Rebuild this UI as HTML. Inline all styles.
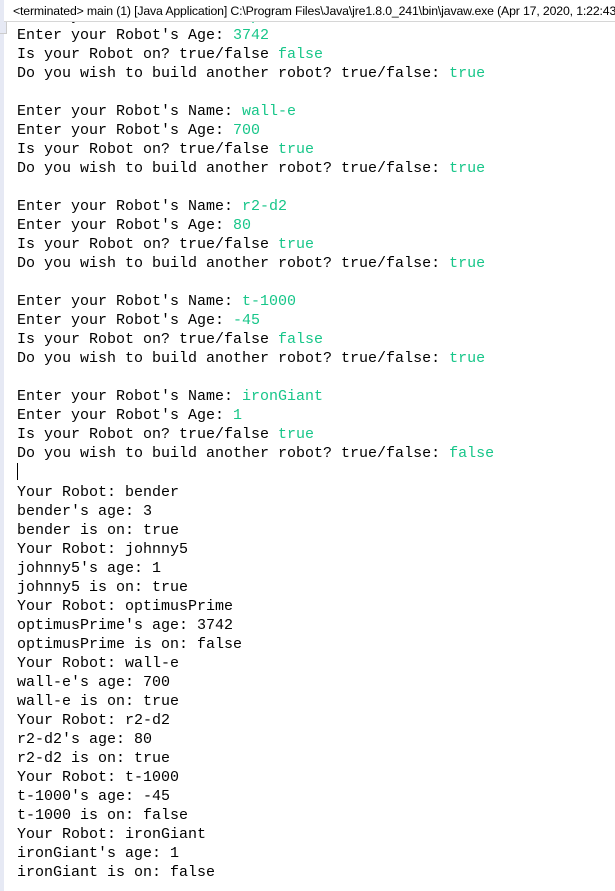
<!DOCTYPE html>
<html><head><style>
body{margin:0;width:615px;height:891px;background:#fff;overflow:hidden;position:relative}
#strip{position:absolute;left:0;top:0;width:4px;height:891px;background:#e6e9f4}
#hdr{position:absolute;left:4px;top:0;width:611px;height:22px;background:#fff;border-bottom:1px solid #d6d6d6;z-index:2;font:12.3px "Liberation Sans",sans-serif;color:#000;white-space:nowrap;overflow:hidden;line-height:22px;padding-left:9px;box-sizing:border-box;letter-spacing:-0.15px}
#tab{position:absolute;left:0;top:22px;width:6px;height:11px;border-right:1px solid #ccc;border-bottom:1px solid #ccc;background:#e6e9f4;z-index:2}
pre{position:absolute;left:17px;top:6.5px;margin:0;font:15px/19px "Liberation Mono",monospace;color:#000}
.g{color:#17c689}
.cur{display:inline-block;width:1px;height:17px;background:#000;vertical-align:-3px}
</style></head><body>
<div id="strip"></div>
<div id="hdr">&lt;terminated&gt; main (1) [Java Application] C:\Program Files\Java\jre1.8.0_241\bin\javaw.exe (Apr 17, 2020, 1:22:43 AM)</div>
<div id="tab"></div>
<pre>Enter your Robot's Name: <span class="g">optimusPrime</span>
Enter your Robot's Age: <span class="g">3742</span>
Is your Robot on? true/false <span class="g">false</span>
Do you wish to build another robot? true/false: <span class="g">true</span>

Enter your Robot's Name: <span class="g">wall-e</span>
Enter your Robot's Age: <span class="g">700</span>
Is your Robot on? true/false <span class="g">true</span>
Do you wish to build another robot? true/false: <span class="g">true</span>

Enter your Robot's Name: <span class="g">r2-d2</span>
Enter your Robot's Age: <span class="g">80</span>
Is your Robot on? true/false <span class="g">true</span>
Do you wish to build another robot? true/false: <span class="g">true</span>

Enter your Robot's Name: <span class="g">t-1000</span>
Enter your Robot's Age: <span class="g">-45</span>
Is your Robot on? true/false <span class="g">false</span>
Do you wish to build another robot? true/false: <span class="g">true</span>

Enter your Robot's Name: <span class="g">ironGiant</span>
Enter your Robot's Age: <span class="g">1</span>
Is your Robot on? true/false <span class="g">true</span>
Do you wish to build another robot? true/false: <span class="g">false</span>
<span class="cur"></span>
Your Robot: bender
bender's age: 3
bender is on: true
Your Robot: johnny5
johnny5's age: 1
johnny5 is on: true
Your Robot: optimusPrime
optimusPrime's age: 3742
optimusPrime is on: false
Your Robot: wall-e
wall-e's age: 700
wall-e is on: true
Your Robot: r2-d2
r2-d2's age: 80
r2-d2 is on: true
Your Robot: t-1000
t-1000's age: -45
t-1000 is on: false
Your Robot: ironGiant
ironGiant's age: 1
ironGiant is on: false</pre>
</body></html>
